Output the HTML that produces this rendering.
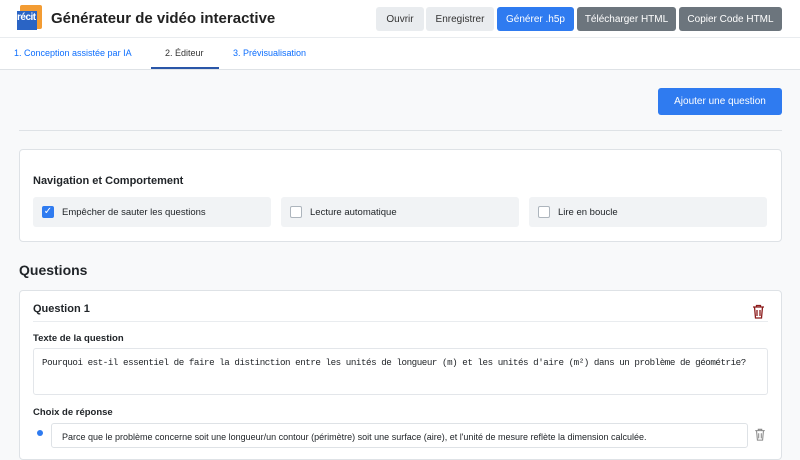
<!DOCTYPE html>
<html><head><meta charset="utf-8"><style>
*{box-sizing:border-box;margin:0;padding:0}
body{width:800px;height:450px;overflow:hidden;background:#f8f9fa;font-family:"Liberation Sans",sans-serif;color:#212529;position:relative}
.abs{position:absolute}
.hdr{left:0;top:0;width:800px;height:38px;background:#fff;border-bottom:1px solid #e9ecef}
.btn{position:absolute;top:7px;height:24px;border-radius:3px;font-size:10px;line-height:24px;text-align:center}
.tabs{left:0;top:38px;width:800px;height:32px;background:#fff;border-bottom:1px solid #dee2e6}
.tab{position:absolute;top:10px;font-size:9px;color:#0d6efd}
.card{background:#fff;border:1px solid #dee2e6;border-radius:4px}
.chk{position:absolute;top:197px;height:30px;background:#f1f3f5;border-radius:3px;font-size:9.5px;line-height:31px;padding-left:29px}
.box{position:absolute;left:9px;top:9px;width:12px;height:12px;border:1px solid #adb5bd;border-radius:2px;background:#fff}
</style></head><body>
<div class="abs hdr"></div>
<div class="abs" style="left:20px;top:5px;width:22px;height:24px;background:#f39c33;border-radius:2px"></div>
<div class="abs" style="left:17px;top:11px;width:20px;height:19px;background:#2a64c5;color:#fff;font-size:10px;font-weight:bold;line-height:13px;letter-spacing:-0.5px">récit</div>
<div class="abs" style="left:51px;top:10px;font-size:15px;font-weight:bold;color:#222">Générateur de vidéo interactive</div>
<div class="btn" style="left:376px;width:48px;background:#e9ecef;color:#333;line-height:25px">Ouvrir</div>
<div class="btn" style="left:426px;width:68px;background:#e9ecef;color:#333;line-height:25px">Enregistrer</div>
<div class="btn" style="left:497px;width:77px;background:#2f7bf0;color:#fff;line-height:25px">Générer .h5p</div>
<div class="btn" style="left:577px;width:99px;background:#6c757d;color:#fff;line-height:25px">Télécharger HTML</div>
<div class="btn" style="left:679px;width:103px;background:#6c757d;color:#fff;line-height:25px">Copier Code HTML</div>
<div class="abs tabs"></div>
<div class="tab" style="left:14px;top:48px">1. Conception assistée par IA</div>
<div class="tab" style="left:165px;top:48px;color:#333">2. Éditeur</div>
<div class="abs" style="left:151px;top:67px;width:68px;height:2px;background:#2a56a8"></div>
<div class="tab" style="left:233px;top:48px">3. Prévisualisation</div>
<div class="abs" style="left:658px;top:88px;width:124px;height:27px;background:#2f7bf0;border-radius:3px;color:#fff;font-size:10px;line-height:28px;text-align:center">Ajouter une question</div>
<div class="abs" style="left:19px;top:130px;width:763px;height:1px;background:#dee2e6"></div>
<div class="abs card" style="left:19px;top:149px;width:763px;height:93px"></div>
<div class="abs" style="left:33px;top:175px;font-size:11px;font-weight:bold">Navigation et Comportement</div>
<div class="chk" style="left:33px;width:238px">Empêcher de sauter les questions<div class="box" style="background:#2f7bf0;border-color:#2f7bf0;color:#fff;font-size:10px;line-height:10px;text-align:center">✓</div></div>
<div class="chk" style="left:281px;width:238px">Lecture automatique<div class="box"></div></div>
<div class="chk" style="left:529px;width:238px">Lire en boucle<div class="box"></div></div>
<div class="abs" style="left:19px;top:262px;font-size:14px;font-weight:bold">Questions</div>
<div class="abs card" style="left:19px;top:290px;width:763px;height:170px"></div>
<div class="abs" style="left:33px;top:303px;font-size:11px;font-weight:bold">Question 1</div>
<div class="abs" style="left:33px;top:321px;width:735px;height:1px;background:#e9ecef"></div>
<svg class="abs" style="left:752px;top:304px" width="13" height="15" viewBox="0 0 13 15"><path d="M1 3h11M4.5 3V1.5h4V3M2.5 3l1 11h6l1-11M5 6v6M8 6v6" fill="none" stroke="#8b1a1a" stroke-width="1.3"/></svg>
<div class="abs" style="left:33px;top:333px;font-size:9.5px;font-weight:bold">Texte de la question</div>
<div class="abs" style="left:33px;top:348px;width:735px;height:47px;background:#fff;border:1px solid #e3e6ea;border-radius:3px;font-family:'Liberation Mono',monospace;font-size:9.2px;letter-spacing:-0.45px;padding:8px 0 0 8px;white-space:nowrap;overflow:hidden">Pourquoi est-il essentiel de faire la distinction entre les unités de longueur (m) et les unités d'aire (m²) dans un problème de géométrie?</div>
<div class="abs" style="left:33px;top:407px;font-size:9.5px;font-weight:bold">Choix de réponse</div>
<div class="abs" style="left:37px;top:430px;width:6px;height:6px;border-radius:50%;background:#2f7bf0"></div>
<div class="abs" style="left:51px;top:423px;width:697px;height:25px;background:#fff;border:1px solid #dee2e6;border-radius:3px;font-size:9px;line-height:26px;padding-left:10px;white-space:nowrap">Parce que le problème concerne soit une longueur/un contour (périmètre) soit une surface (aire), et l'unité de mesure reflète la dimension calculée.</div>
<svg class="abs" style="left:754px;top:428px" width="12" height="13" viewBox="0 0 13 15"><path d="M1 3h11M4.5 3V1.5h4V3M2.5 3l1 11h6l1-11M5 6v6M8 6v6" fill="none" stroke="#888" stroke-width="1.2"/></svg>
</body></html>
